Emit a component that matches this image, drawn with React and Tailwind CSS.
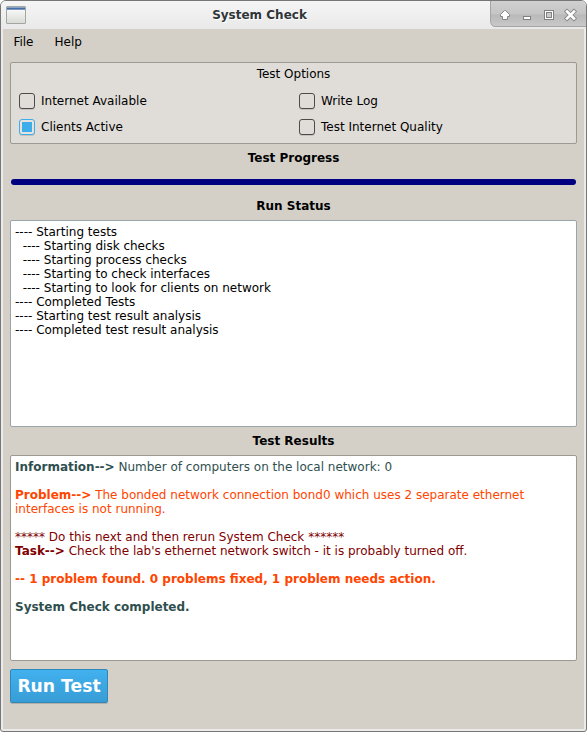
import React from "react";

const statusLines = [
  "---- Starting tests",
  "  ---- Starting disk checks",
  "  ---- Starting process checks",
  "  ---- Starting to check interfaces",
  "  ---- Starting to look for clients on network",
  "---- Completed Tests",
  "---- Starting test result analysis",
  "---- Completed test result analysis",
];

function Checkbox({ label, checked }) {
  return (
    <label className="flex h-4 items-center">
      <span
        className={
          checked
            ? "flex size-4 items-center justify-center rounded-[3px] border border-[#3daee9] bg-[#e6e3df] shadow-[0_1px_0_#c4c1bc]"
            : "flex size-4 items-center justify-center rounded-[3px] border border-[#4d4b49] bg-[#e0ddd8] shadow-[0_1px_0_#c4c1bc]"
        }
      >
        {checked && <span className="size-[10px] bg-[#3daee9]" />}
      </span>
      <span className="ml-1.5">{label}</span>
    </label>
  );
}

function WindowControls() {
  return (
    <svg width="97" height="27" viewBox="0 0 97 27" className="block">
      <defs>
        <linearGradient id="tab" x1="0" y1="0" x2="0" y2="1">
          <stop offset="0" stopColor="#d0d0d0" />
          <stop offset="0.5" stopColor="#c5c5c5" />
          <stop offset="0.55" stopColor="#b9b9b9" />
          <stop offset="1" stopColor="#c9c9c9" />
        </linearGradient>
      </defs>
      <path d="M1.5 0V20Q2 25.5 6 25.5H97V0Z" fill="url(#tab)" />
      <path d="M1.5 0V20Q2 25.5 6 25.5H97" fill="none" stroke="#a5a5a5" />
      <path
        d="M15.5 9.5H16.5L20.5 13.5V15.5H18.5V18.5H13.5V15.5H11.5V13.5Z"
        fill="#fff"
        stroke="#868686"
        strokeLinejoin="round"
      />
      <rect x="34.5" y="15.5" width="7" height="3" fill="#fff" stroke="#808080" />
      <rect x="55.5" y="9.5" width="9" height="9" fill="#fff" stroke="#808080" />
      <rect x="57.5" y="11.5" width="5" height="5" fill="#ccc" stroke="#808080" />
      <path d="M78 10.5 85 17.5M85 10.5 78 17.5" stroke="#868686" strokeWidth="4.4" strokeLinecap="square" />
      <path d="M78 10.5 85 17.5M85 10.5 78 17.5" stroke="#fff" strokeWidth="2.6" strokeLinecap="square" />
    </svg>
  );
}

function TitleBar() {
  return (
    <header className="flex h-7 shrink-0 bg-linear-to-b from-[#f5f5f5] to-[#e9e9e9]">
      <div className="w-[29px] shrink-0 pl-[5px] pt-[5px]">
        <svg width="20" height="18" viewBox="0 0 20 18" className="block">
          <defs>
            <linearGradient id="pane" x1="0" y1="0" x2="0" y2="1">
              <stop offset="0" stopColor="#fff" />
              <stop offset="1" stopColor="#d9dbd5" />
            </linearGradient>
          </defs>
          <rect x="0.5" y="0.5" width="19" height="17" rx="0.5" fill="url(#pane)" stroke="#a4a7a1" />
          <path d="M1 1.5H19" stroke="#8ba4c8" />
          <path d="M1 2.5H19" stroke="#466fa9" />
          <path d="M1 3.5H19" stroke="#7896c2" />
        </svg>
      </div>
      <h1 className="grow pt-[7px] text-center font-bold text-[#303538] [text-shadow:1px_1px_0_#fff]">System Check</h1>
      <WindowControls />
    </header>
  );
}

export default function App() {
  return (
    <div className="h-[732px] w-[587px] bg-white font-['DejaVu_Sans',sans-serif] text-[12px] leading-[14px] text-black">
      <div className="flex h-full flex-col overflow-hidden rounded-t-[6px] rounded-b-[3px] border border-[#777] bg-[#ebebeb]">
        <TitleBar />
        <div className="mx-[2px] mb-[2px] flex min-h-0 grow flex-col bg-[#d4d0c8]">
          <nav className="flex h-[33px] shrink-0 gap-[21px] pl-[10.4px] pt-[6px]">
            <span>File</span>
            <span>Help</span>
          </nav>
          <main className="flex flex-col pl-[7px] pr-[7px]">
            <section className="h-[82px] rounded-[2px] border border-[#9d9a94] bg-[#e0ddd8] pt-1">
              <h2 className="text-center">Test Options</h2>
              <div className="mt-[12px] grid grid-cols-[280px_1fr] gap-y-[10px] pl-2">
                <Checkbox label="Internet Available" />
                <Checkbox label="Write Log" />
                <Checkbox label="Clients Active" checked />
                <Checkbox label="Test Internet Quality" />
              </div>
            </section>
            <h2 className="mt-[7px] text-center font-bold">Test Progress</h2>
            <div className="mx-px mt-[14px] h-[6px] rounded-full bg-[#000080]" />
            <h2 className="mt-[14px] text-center font-bold">Run Status</h2>
            <section className="mt-[7px] h-[207px] whitespace-pre rounded-[2px] border border-[#98a5ab] bg-white px-1 pt-1">
              {statusLines.map((line) => (
                <p key={line}>{line}</p>
              ))}
            </section>
            <h2 className="mt-[7px] text-center font-bold">Test Results</h2>
            <section className="mt-[7px] h-[206px] rounded-[2px] border border-[#9d9a94] bg-white px-1 pt-1">
              <p className="text-[#2f4f4f]">
                <b>Information--&gt;</b> Number of computers on the local network: 0
              </p>
              <p className="mt-[14px] text-[#ff4500]">
                <b>Problem--&gt;</b> The bonded network connection bond0 which uses 2 separate ethernet interfaces is not
                running.
              </p>
              <p className="mt-[14px] text-[#800000]">***** Do this next and then rerun System Check ******</p>
              <p className="text-[#800000]">
                <b>Task--&gt;</b> Check the lab's ethernet network switch - it is probably turned off.
              </p>
              <p className="mt-[14px] font-bold text-[#ff4500]">
                -- 1 problem found. 0 problems fixed, 1 problem needs action.
              </p>
              <p className="mt-[14px] font-bold text-[#2f4f4f]">System Check completed.</p>
            </section>
            <button className="mt-2 flex h-[34px] w-[98px] items-center justify-center whitespace-nowrap rounded-[2px] border border-[#2f88b8] bg-linear-to-b from-[#41b1ef] to-[#389dd5] text-[17.2px] font-bold leading-5 text-white shadow-[0_1px_0_#b3afa8]">
              Run Test
            </button>
          </main>
        </div>
      </div>
    </div>
  );
}
